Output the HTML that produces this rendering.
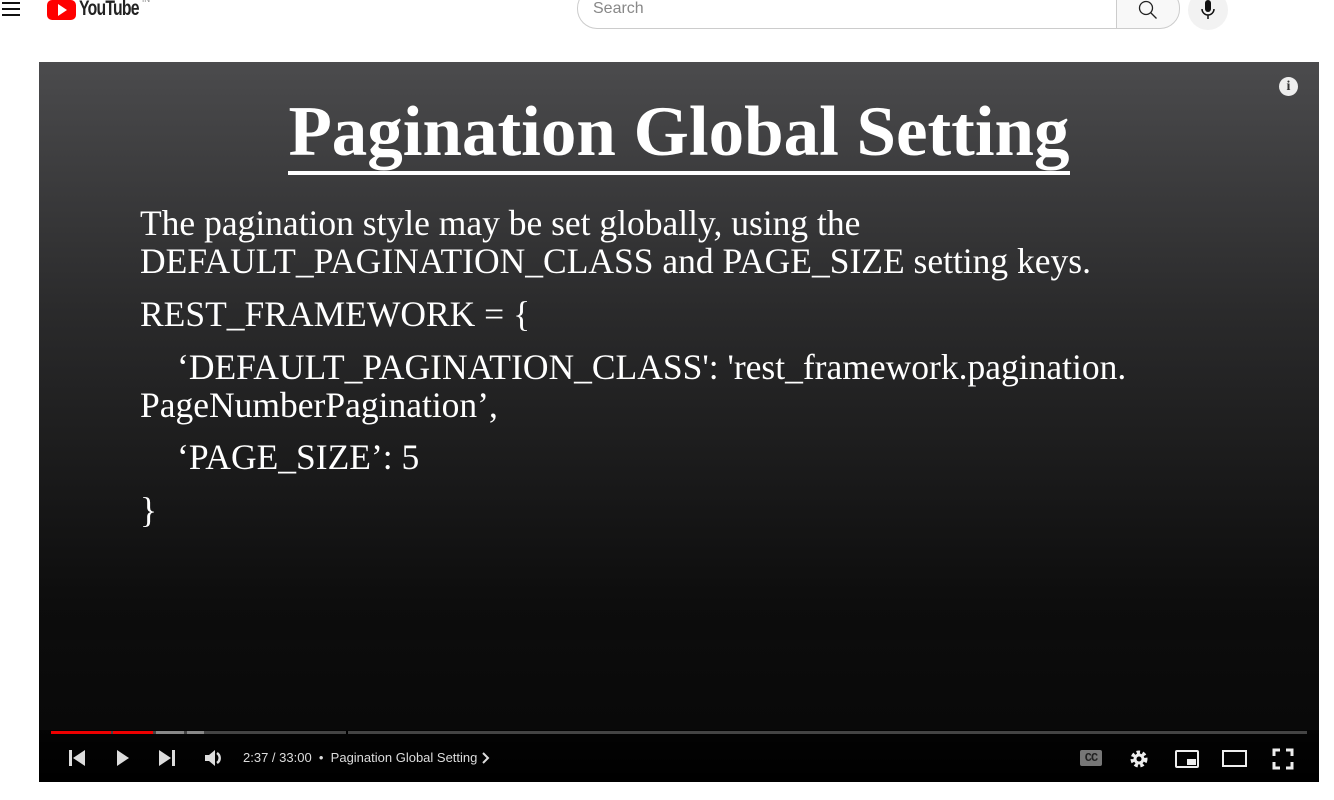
<!DOCTYPE html>
<html><head><meta charset="utf-8"><style>
*{margin:0;padding:0;box-sizing:border-box}
body{width:1334px;height:800px;background:#fff;position:relative;overflow:hidden;font-family:"Liberation Sans",sans-serif}
.abs{position:absolute}
.vid{left:39px;top:62px;width:1280px;height:720px;background:linear-gradient(#4b4b4d 0%,#2a2a2b 35%,#0d0d0d 75%,#070707 100%)}
.s{font-family:"Liberation Serif",serif;color:#fff;position:absolute;white-space:nowrap}
.b{font-size:35.5px;left:101px}
</style></head><body>
<div class="abs" style="left:2px;top:2px;width:18px;height:2px;background:#111"></div>
<div class="abs" style="left:2px;top:8px;width:18px;height:2px;background:#111"></div>
<div class="abs" style="left:2px;top:14px;width:18px;height:2px;background:#111"></div>
<div class="abs" style="left:47px;top:0;width:29px;height:20px;background:#f00;border-radius:5px"></div>
<div class="abs" style="left:58px;top:4px;width:0;height:0;border-left:9px solid #fff;border-top:6px solid transparent;border-bottom:6px solid transparent"></div>
<div class="abs" style="left:79px;top:-3px;font-size:21px;font-weight:bold;letter-spacing:-1px;color:#222;transform:scaleX(.75);transform-origin:left">YouTube</div>
<div class="abs" style="left:142px;top:-5px;font-size:8px;color:#888">IN</div>
<div class="abs" style="left:577px;top:-12px;width:540px;height:41px;border:1px solid #ccc;border-right:none;border-radius:20px 0 0 20px"></div>
<div class="abs" style="left:593px;top:0;font-size:16px;color:#888">Search</div>
<div class="abs" style="left:1116px;top:-12px;width:64px;height:41px;border:1px solid #ccc;background:#f8f8f8;border-radius:0 20px 20px 0"></div>
<svg class="abs" style="left:1137px;top:0" width="22" height="22" viewBox="0 0 22 22"><circle cx="9" cy="8" r="6.5" fill="none" stroke="#222" stroke-width="1.3"/><path d="M13.5 12.5l6 6" stroke="#222" stroke-width="1.3"/></svg>
<div class="abs" style="left:1188px;top:-10px;width:40px;height:40px;border-radius:50%;background:#f2f2f2"></div>
<svg class="abs" style="left:1200px;top:0" width="16" height="22" viewBox="0 0 16 22"><rect x="5" y="0" width="6" height="12" rx="3" fill="#111"/><path d="M2 9a6 6 0 0 0 12 0M8 15v4" stroke="#111" stroke-width="1.5" fill="none"/></svg>

<div class="abs vid">
<div class="abs" style="left:1240px;top:15px;width:19px;height:19px;border-radius:50%;background:#eee;color:#333;font:bold 14px 'Liberation Serif';text-align:center;line-height:19px">i</div>
<div class="s" style="left:0;width:1280px;text-align:center;top:29px;font-size:71px;font-weight:bold"><span style="border-bottom:4px solid #fff;line-height:82px">Pagination Global Setting</span></div>
<div class="s b" style="top:140px">The pagination style may be set globally, using the</div>
<div class="s b" style="top:178px">DEFAULT_PAGINATION_CLASS and PAGE_SIZE setting keys.</div>
<div class="s b" style="top:231px">REST_FRAMEWORK = {</div>
<div class="s b" style="top:284px;left:138px">‘DEFAULT_PAGINATION_CLASS': 'rest_framework.pagination.</div>
<div class="s b" style="top:322px">PageNumberPagination’,</div>
<div class="s b" style="top:374px;left:138px">‘PAGE_SIZE’: 5</div>
<div class="s b" style="top:427px">}</div>
<div class="abs" style="left:0;top:668px;width:1280px;height:52px;background:linear-gradient(rgba(0,0,0,.6),#000)"></div>
<div class="abs" style="left:12px;top:669px;width:1256px;height:3px;background:#444"></div>
<div class="abs" style="left:12px;top:669px;width:60px;height:3px;background:#e00"></div>
<div class="abs" style="left:74px;top:669px;width:40px;height:3px;background:#e00"></div>
<div class="abs" style="left:117px;top:669px;width:28px;height:3px;background:#888"></div>
<div class="abs" style="left:148px;top:669px;width:17px;height:3px;background:#888"></div>
<div class="abs" style="left:307px;top:669px;width:2px;height:3px;background:#000"></div>
<svg class="abs" style="left:28px;top:686px" width="140" height="20" viewBox="0 0 140 20">
<path d="M2 2h3v16H2zM6 10l12-8v16z" fill="#ddd"/>
<path d="M50 2l12 8-12 8z" fill="#ddd"/>
<path d="M92 2l12 8-12 8zM105 2h3v16h-3z" fill="#ddd"/></svg>
<svg class="abs" style="left:164px;top:686px" width="24" height="20" viewBox="0 0 24 20"><path d="M2 7h4l6-5v16l-6-5H2z" fill="#ddd"/><path d="M14 5a6 6 0 0 1 0 10" stroke="#ddd" stroke-width="2.5" fill="none"/></svg>
<div class="abs" style="left:204px;top:688px;font-size:13px;color:#ddd;white-space:nowrap">2:37 / 33:00 &nbsp;•&nbsp; Pagination Global Setting</div>
<svg class="abs" style="left:442px;top:690px" width="10" height="12"><path d="M2 1l5 5-5 5" stroke="#ddd" stroke-width="2" fill="none"/></svg>
<div class="abs" style="left:1041px;top:688px;width:22px;height:16px;background:#777;border-radius:2px;color:#222;font:bold 12px 'Liberation Mono';text-align:center;line-height:16px;letter-spacing:-1px">CC</div>
<svg class="abs" style="left:1089px;top:686px" width="22" height="22" viewBox="0 0 22 22"><circle cx="11" cy="11" r="6" fill="none" stroke="#eee" stroke-width="5" stroke-dasharray="3 2.2"/><circle cx="11" cy="11" r="5.5" fill="#eee"/><circle cx="11" cy="11" r="2.5" fill="#000"/></svg>
<div class="abs" style="left:1136px;top:688px;width:24px;height:18px;border:2px solid #eee;border-radius:2px"><div class="abs" style="left:10px;top:7px;width:9px;height:6px;background:#eee"></div></div>
<div class="abs" style="left:1183px;top:688px;width:25px;height:17px;border:2px solid #eee"></div>
<svg class="abs" style="left:1233px;top:686px" width="22" height="22" viewBox="0 0 22 22"><path d="M2 8V2h6M14 2h6v6M20 14v6h-6M8 20H2v-6" stroke="#eee" stroke-width="3" fill="none"/></svg>
</div>
</body></html>
